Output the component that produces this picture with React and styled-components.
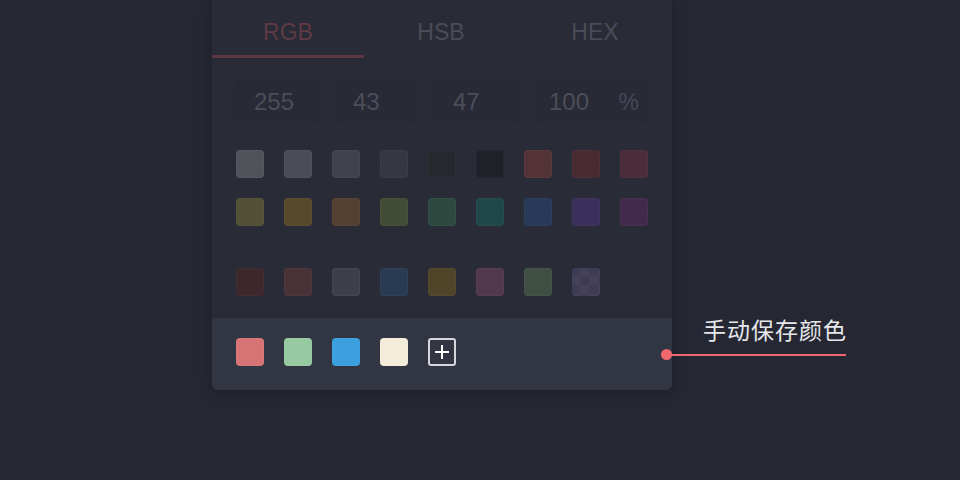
import React from 'react'
import styled, { createGlobalStyle } from 'styled-components'

const GlobalStyle = createGlobalStyle`
  html, body {
    margin: 0;
    padding: 0;
    background: #252732;
    font-family: "Liberation Sans", "Noto Sans CJK SC", sans-serif;
  }
`;

const tabs = ['RGB', 'HSB', 'HEX'];

const inputs = [
  { value: '255', width: 84, pad: 17, gap: 0 },
  { value: '43', width: 79, pad: 16, gap: 16 },
  { value: '47', width: 84, pad: 17, gap: 20 },
  { value: '100', width: 111, pad: 11, gap: 18, unit: '%' },
];

const presetRows = [
  ['#50535a', '#4a4d55', '#40434b', '#363841', '#25282d', '#1f2129', '#533336', '#4a2a31', '#4c2b3b'],
  ['#525035', '#57492b', '#543f30', '#434c34', '#2e4a40', '#1f4749', '#273a58', '#3b2f5b', '#432a4c'],
];

const recent = ['#3e262d', '#4b3138', '#3d4049', '#293b53', '#504529', '#53374d', '#3f4f43', 'checker'];

const saved = ['#d67475', '#97caa0', '#3c9fde', '#f3ecd9'];

function App() {
  return (
    <>
      <GlobalStyle />
      <Page>
        <Panel>
          <TabBar>
            {tabs.map((t, i) => (
              <Tab key={t} $active={i === 0}>{t}</Tab>
            ))}
          </TabBar>

          <InputRow>
            {inputs.map((f) => (
              <Field key={f.value} $width={f.width} $pad={f.pad} $gap={f.gap}>
                <span>{f.value}</span>
                {f.unit && <Unit>{f.unit}</Unit>}
              </Field>
            ))}
          </InputRow>

          <Presets>
            {presetRows.map((row, r) => (
              <SwatchRow key={r}>
                {row.map((c, i) => (
                  <Swatch key={i} $color={c} $outlined={c === '#25282d'} />
                ))}
              </SwatchRow>
            ))}
          </Presets>

          <Recent>
            <SwatchRow>
              {recent.map((c, i) =>
                c === 'checker' ? <Checker key={i} /> : <Swatch key={i} $color={c} />
              )}
            </SwatchRow>
          </Recent>

          <Saved>
            <SwatchRow>
              {saved.map((c) => (
                <Swatch key={c} $color={c} />
              ))}
              <AddButton>
                <svg width="16" height="16" viewBox="0 0 16 16">
                  <path d="M8 1v14M1 8h14" stroke="#ffffff" strokeWidth="2" />
                </svg>
              </AddButton>
            </SwatchRow>
          </Saved>

          <Callout>
            <CalloutText>手动保存颜色</CalloutText>
            <CalloutLine />
          </Callout>
        </Panel>
      </Page>
    </>
  )
}

const Page = styled.div`
  width: 960px;
  height: 480px;
  padding-left: 212px;
  box-sizing: border-box;
  overflow: hidden;
`;

const Panel = styled.div`
  position: relative;
  width: 460px;
  background: #292b36;
  border-radius: 0 0 6px 6px;
  box-shadow: 0 2px 14px rgba(0, 0, 0, 0.22);
`;

const TabBar = styled.div`
  display: grid;
  grid-template-columns: 152px 1fr 1fr;
  height: 58px;
  border-bottom: 1px solid #262833;
`;

const Tab = styled.div`
  display: flex;
  align-items: center;
  justify-content: center;
  padding-top: 9px;
  box-sizing: border-box;
  font-size: 23px;
  color: ${(p) => (p.$active ? '#5f3a44' : '#4a4c58')};
  border-bottom: 3px solid ${(p) => (p.$active ? '#5c3741' : 'transparent')};
`;

const InputRow = styled.div`
  display: flex;
  align-items: center;
  padding: 21px 24px 0;
`;

const Field = styled.div`
  display: flex;
  align-items: center;
  justify-content: space-between;
  width: ${(p) => p.$width}px;
  height: 42px;
  margin-left: ${(p) => p.$gap}px;
  padding: 2px 8px 0 ${(p) => p.$pad}px;
  box-sizing: border-box;
  background: #282a35;
  border: 1px solid #262832;
  border-radius: 2px;
  font-size: 24px;
  color: #4b4e5a;
`;

const Unit = styled.span`
  color: #454856;
  font-size: 23px;
`;

const Presets = styled.div`
  display: flex;
  flex-direction: column;
  gap: 20px;
  padding: 28px 24px 21px;
  border-bottom: 1px solid #262832;
`;

const SwatchRow = styled.div`
  display: flex;
  gap: 20px;
`;

const Swatch = styled.div`
  width: 28px;
  height: 28px;
  border-radius: 4px;
  box-sizing: border-box;
  background: ${(p) => p.$color};
  border: 1px solid ${(p) => (p.$outlined ? '#2c2f35' : 'rgba(255, 255, 255, 0.03)')};
`;

const Checker = styled.div`
  width: 28px;
  height: 28px;
  border-radius: 4px;
  background: repeating-conic-gradient(#46415b 0 25%, #403b54 0 50%) -1px -1px / 18px 18px;
`;

const Recent = styled.div`
  padding: 20px 24px 22px;
`;

const Saved = styled.div`
  padding: 20px 24px 24px;
  background: #323542;
  border-radius: 0 0 6px 6px;
`;

const AddButton = styled.div`
  display: flex;
  align-items: center;
  justify-content: center;
  width: 28px;
  height: 28px;
  box-sizing: border-box;
  border: 2px solid #d6d7dc;
  border-radius: 3px;
`;

const Callout = styled.div`
  position: absolute;
  left: 449px;
  top: 315px;
  width: 185px;
  display: flex;
  flex-direction: column;
  align-items: flex-end;
`;

const CalloutText = styled.div`
  font-size: 23px;
  letter-spacing: 1px;
  color: #e6e7ea;
  margin-right: -1px;
  line-height: 32px;
`;

const CalloutLine = styled.div`
  position: relative;
  width: 180px;
  height: 2px;
  margin-top: 7px;
  background: #f0676e;

  &::before {
    content: '';
    position: absolute;
    left: -5px;
    top: -5px;
    width: 11px;
    height: 11px;
    border-radius: 50%;
    background: #f0676e;
  }
`;

export default App
